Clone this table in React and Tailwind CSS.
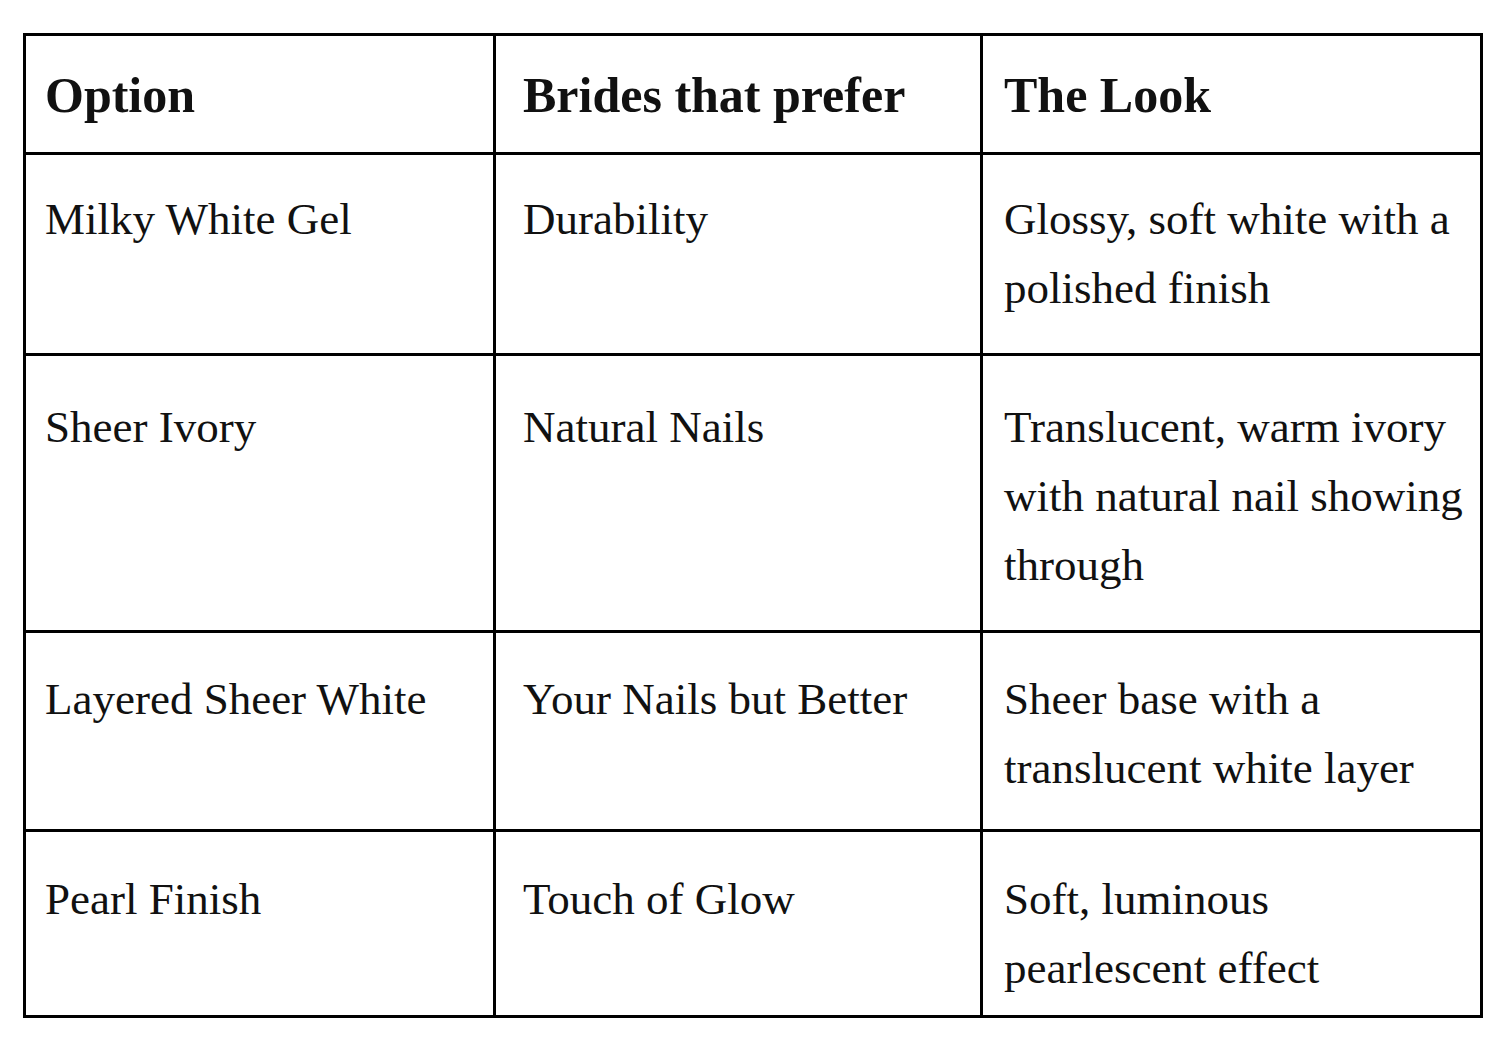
import React from "react";

const ROWS = [
  {
    h: "h-[201px]",
    pt: "pt-[30px]",
    cells: ["Milky White Gel", "Durability", ["Glossy, soft white with a", "polished finish"]],
  },
  {
    h: "h-[277px]",
    pt: "pt-[37px]",
    cells: ["Sheer Ivory", "Natural Nails", ["Translucent, warm ivory", "with natural nail showing", "through"]],
  },
  {
    h: "h-[199px]",
    pt: "pt-[32px]",
    cells: ["Layered Sheer White", "Your Nails but Better", ["Sheer base with a", "translucent white layer"]],
  },
  {
    h: "h-[186px]",
    pt: "pt-[33px]",
    cells: ["Pearl Finish", "Touch of Glow", ["Soft, luminous", "pearlescent effect"]],
  },
];

const COLS = [
  "w-[470px] pl-[19px] border-r-[3px]",
  "w-[487px] pl-[27px] border-r-[3px]",
  "w-[500px] pl-[21px] border-r-[3px]",
];

function Cell({ col, pt, bold, children }) {
  return (
    <div
      className={`${COLS[col]} ${pt} border-black whitespace-nowrap ${
        bold ? "font-bold text-[50px]" : "text-[45px]"
      } leading-[69px] text-[#111]`}
    >
      {Array.isArray(children)
        ? children.map((line, i) => <div key={i}>{line}</div>)
        : children}
    </div>
  );
}

export default function App() {
  return (
    <div
      className="min-h-screen bg-white pt-[33px] pl-[23px]"
      style={{ fontFamily: '"Liberation Serif", "Times New Roman", serif' }}
    >
      <div className="w-[1460px] border-t-[3px] border-l-[3px] border-black">
        <div className="flex h-[119px] border-b-[3px] border-black">
          <Cell col={0} pt="pt-[25px]" bold>Option</Cell>
          <Cell col={1} pt="pt-[25px]" bold>Brides that prefer</Cell>
          <Cell col={2} pt="pt-[25px]" bold>The Look</Cell>
        </div>
        {ROWS.map((row, r) => (
          <div key={r} className={`flex ${row.h} border-b-[3px] border-black`}>
            {row.cells.map((c, i) => (
              <Cell key={i} col={i} pt={row.pt}>{c}</Cell>
            ))}
          </div>
        ))}
      </div>
    </div>
  );
}
